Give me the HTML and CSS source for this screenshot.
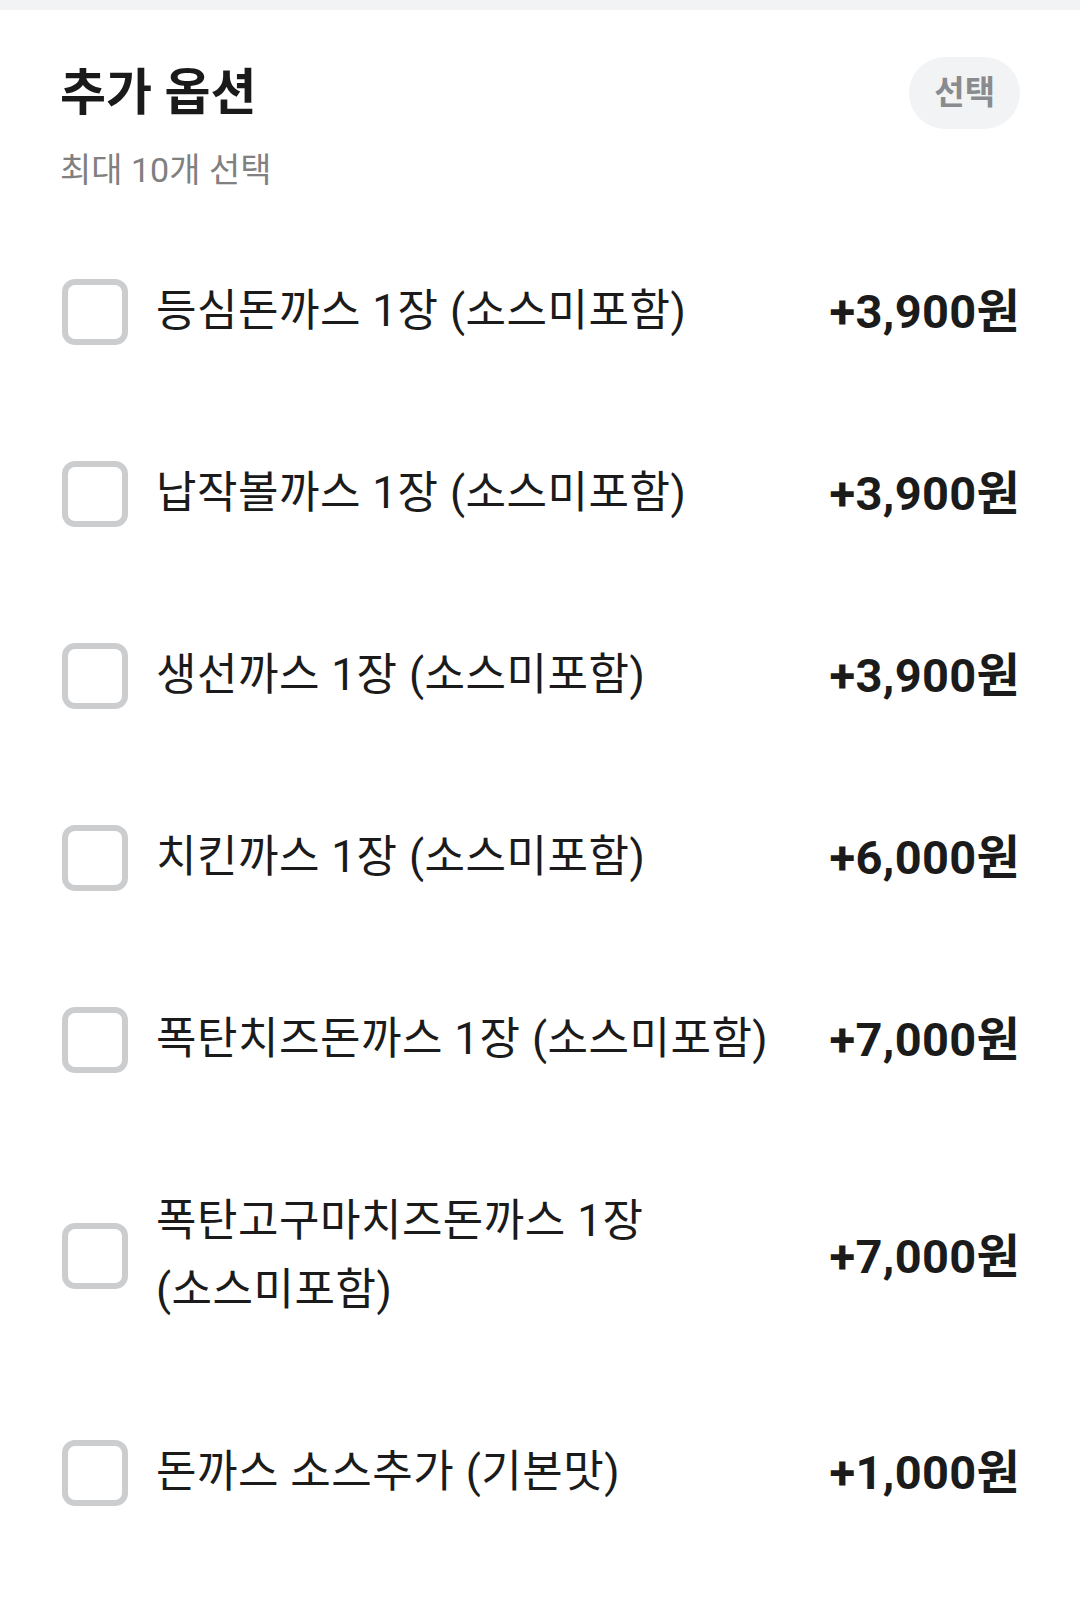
FILE: index.html
```html
<!DOCTYPE html>
<html lang="ko">
<head>
<meta charset="utf-8">
<link rel="stylesheet" href="styles.css">
</head>
<body>
<div class="topbar"></div>
<section class="options">
  <header class="head">
    <h2 class="title">추가 옵션</h2>
    <span class="pill">선택</span>
  </header>
  <p class="sub">최대 10개 선택</p>
  <ul class="list">
    <li class="row"><span class="box"></span><span class="name">등심돈까스 1장 (소스미포함)</span><span class="price">+3,900원</span></li>
    <li class="row"><span class="box"></span><span class="name">납작볼까스 1장 (소스미포함)</span><span class="price">+3,900원</span></li>
    <li class="row"><span class="box"></span><span class="name">생선까스 1장 (소스미포함)</span><span class="price">+3,900원</span></li>
    <li class="row"><span class="box"></span><span class="name">치킨까스 1장 (소스미포함)</span><span class="price">+6,000원</span></li>
    <li class="row"><span class="box"></span><span class="name">폭탄치즈돈까스 1장 (소스미포함)</span><span class="price">+7,000원</span></li>
    <li class="row"><span class="box"></span><span class="name">폭탄고구마치즈돈까스 1장 (소스미포함)</span><span class="price">+7,000원</span></li>
    <li class="row"><span class="box"></span><span class="name">돈까스 소스추가 (기본맛)</span><span class="price">+1,000원</span></li>
  </ul>
</section>
</body>
</html>
```
FILE: styles.css
```css
html, body {
  margin: 0;
  padding: 0;
  background: #ffffff;
}
body {
  font-family: Roboto, "Noto Sans CJK KR", sans-serif;
  color: #1b1b1b;
}
.topbar {
  height: 10px;
  background: #f2f3f5;
}
.options {
  padding: 47px 60px 0 60px;
}
.head {
  display: flex;
  align-items: center;
  justify-content: space-between;
  height: 72px;
}
.title {
  margin: 0;
  font-size: 50px;
  font-weight: 700;
  line-height: 72px;
  color: #1a1a1a;
}
.pill {
  height: 72px;
  padding: 0 25px;
  border-radius: 36px;
  background: #f2f3f5;
  color: #8a8b8e;
  font-size: 33px;
  font-weight: 700;
  line-height: 72px;
}
.sub {
  margin: 19px 0 0 0;
  font-size: 34px;
  line-height: 44px;
  color: #808080;
}
.list {
  list-style: none;
  margin: 29px 0 0 0;
  padding: 0;
}
.row {
  display: flex;
  align-items: center;
  padding: 56px 0 57px 0;
}
.box {
  flex: none;
  width: 54px;
  height: 54px;
  margin-left: 2px;
  border: 6px solid #cccdcf;
  border-radius: 13px;
  background: #fff;
}
.name {
  flex: 1;
  margin-left: 28px;
  font-size: 44px;
  letter-spacing: 0.5px;
  line-height: 69px;
  color: #1b1b1b;
  word-break: keep-all;
}
.price {
  flex: none;
  margin-left: 36px;
  font-size: 47px;
  font-weight: 700;
  letter-spacing: 0.3px;
  line-height: 69px;
  color: #1b1b1b;
  white-space: nowrap;
}
```
